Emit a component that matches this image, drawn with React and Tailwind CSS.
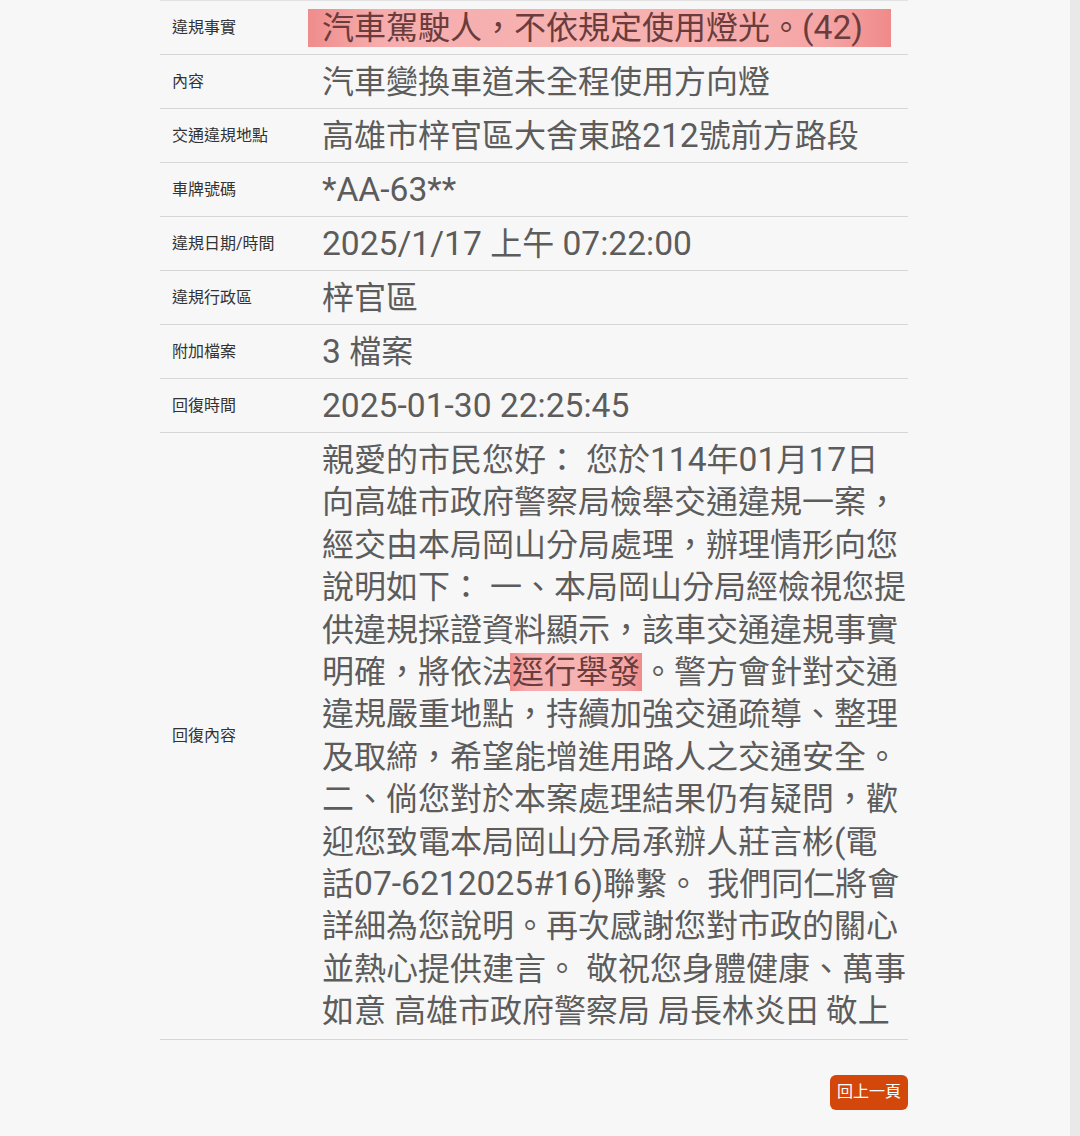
import React from 'react';

const rows = [
  { label: '違規事實', value: '汽車駕駛人，不依規定使用燈光。(42)', mark: true },
  { label: '內容', value: '汽車變換車道未全程使用方向燈' },
  { label: '交通違規地點', value: '高雄市梓官區大舍東路212號前方路段' },
  { label: '車牌號碼', value: '*AA-63**' },
  { label: '違規日期/時間', value: '2025/1/17 上午 07:22:00' },
  { label: '違規行政區', value: '梓官區' },
  { label: '附加檔案', value: '3 檔案' },
  { label: '回復時間', value: '2025-01-30 22:25:45' },
];

const replyLines = [
  '親愛的市民您好： 您於114年01月17日',
  '向高雄市政府警察局檢舉交通違規一案，',
  '經交由本局岡山分局處理，辦理情形向您',
  '說明如下： 一、本局岡山分局經檢視您提',
  '供違規採證資料顯示，該車交通違規事實',
  null,
  '違規嚴重地點，持續加強交通疏導、整理',
  '及取締，希望能增進用路人之交通安全。',
  '二、倘您對於本案處理結果仍有疑問，歡',
  '迎您致電本局岡山分局承辦人莊言彬(電',
  '話07-6212025#16)聯繫。 我們同仁將會',
  '詳細為您說明。再次感謝您對市政的關心',
  '並熱心提供建言。 敬祝您身體健康、萬事',
  '如意 高雄市政府警察局 局長林炎田 敬上',
];

const markBg =
  'bg-[linear-gradient(90deg,#f08c8c_0%,#f6acac_12%,#f7b3b3_50%,#f5a6a6_88%,#f08a8a_100%)]';

// Latin runs render a bit wider on the device, scale them up slightly
const Mixed = ({ text }) => {
  const parts = text.split(/([\x20-\x7e]+)/);
  return parts.map((p, i) =>
    /[\x21-\x7e]/.test(p) ? (
      <span key={i} className="text-[33.6px] leading-none">
        {p}
      </span>
    ) : (
      <React.Fragment key={i}>{p}</React.Fragment>
    )
  );
};

const App = () => {
  return (
    <div className="flex min-h-[1136px] bg-[#f7f7f7] font-['Roboto','Noto_Sans_CJK_TC',sans-serif]">
      <div className="flex-1">
        <div className="ml-[160px] w-[748px]">
          {/* Detail rows */}
          <div className="border-t border-[#e2e2e2]">
            {rows.map((row) => (
              <div key={row.label} className="flex h-[54px] border-b border-[#d6d6d6]">
                <div className="w-[150px] pl-3 flex items-center text-[16px] text-[#333]">
                  {row.label}
                </div>
                <div className="flex-1 pl-3 flex items-center text-[32px] leading-[42px] text-[#5c5c5c] whitespace-nowrap">
                  {row.mark ? (
                    <span className={`inline-block -ml-[14px] pl-[14px] pr-[28px] leading-[38px] text-[#6a3c3c] ${markBg}`}>
                      <Mixed text={row.value} />
                    </span>
                  ) : (
                    <span>
                      <Mixed text={row.value} />
                    </span>
                  )}
                </div>
              </div>
            ))}

            {/* Reply content */}
            <div className="flex border-b border-[#d6d6d6]">
              <div className="w-[150px] pl-3 flex items-center text-[16px] text-[#333]">
                回復內容
              </div>
              <div className="flex-1 pl-3 pt-[6px] pb-[6px] text-[32px] leading-[42.4px] text-[#5c5c5c] whitespace-nowrap">
                {replyLines.map((line, i) =>
                  line === null ? (
                    <div key={i}>
                      明確，將依法
                      <span className={`inline-block -ml-[4px] pl-[2px] pr-[2px] leading-[38px] text-[#6a3c3c] ${markBg}`}>
                        逕行舉發
                      </span>
                      。警方會針對交通
                    </div>
                  ) : (
                    <div key={i}>
                      <Mixed text={line} />
                    </div>
                  )
                )}
              </div>
            </div>
          </div>

          {/* Back button */}
          <div className="flex justify-end pt-[35px]">
            <button className="h-[35px] px-[7px] rounded-md bg-[#d4470b] text-white text-[16px] leading-none">
              回上一頁
            </button>
          </div>
        </div>
      </div>
      <div className="w-[10px] bg-[#e9e9e9]" />
    </div>
  );
};

export default App;
